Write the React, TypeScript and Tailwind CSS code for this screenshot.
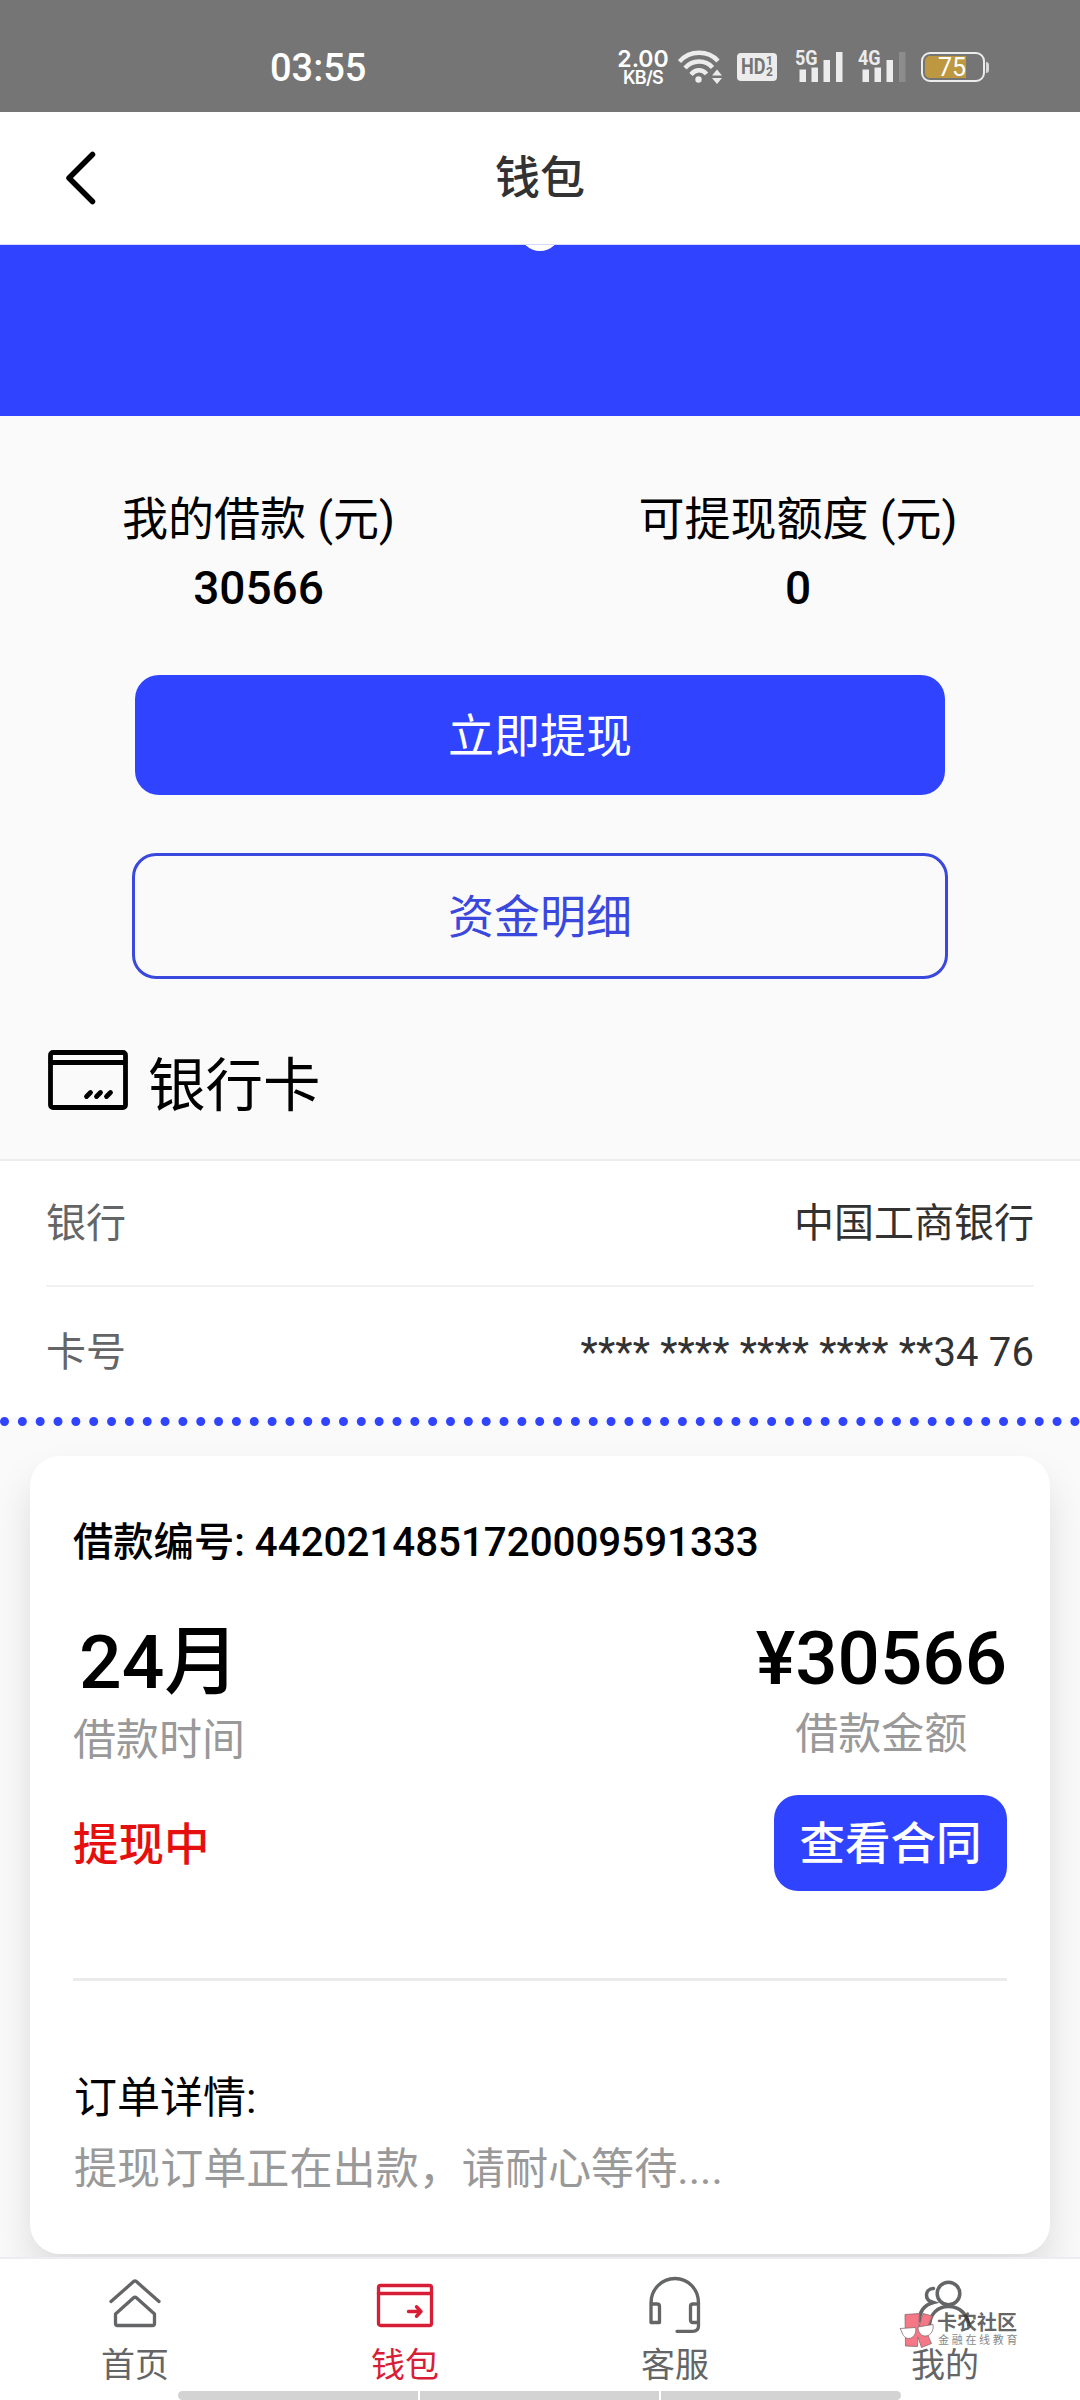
import React from 'react';

const NAV_ITEMS = [
  { key: 'home', label: '首页', icon: <HomeIcon /> },
  { key: 'wallet', label: '钱包', icon: <WalletIcon />, active: true },
  { key: 'service', label: '客服', icon: <HeadsetIcon /> },
  { key: 'mine', label: '我的', icon: <UsersIcon /> },
];

function HomeIcon() {
  return (
    <svg width="60" height="60" viewBox="0 0 60 60" fill="none" stroke="currentColor" strokeWidth="3.3" strokeLinecap="round" strokeLinejoin="round">
      <path d="M6 28.5 L28.6 8.6 Q30 7.4 31.4 8.6 L54 28.5" />
      <path d="M10.5 41 L28.6 24.8 Q30 23.6 31.4 24.8 L49.5 41 V50.5 Q49.5 52.5 47.5 52.5 H12.5 Q10.5 52.5 10.5 50.5 Z" />
    </svg>
  );
}

function WalletIcon() {
  return (
    <svg width="60" height="60" viewBox="0 0 60 60" fill="none" stroke="currentColor" strokeWidth="3.3" strokeLinecap="round" strokeLinejoin="round">
      <rect x="3.5" y="12.5" width="53" height="40" rx="2" />
      <path d="M3.5 20.5 H56.5" />
      <path d="M33.5 38.5 H45.5 M41.5 33.8 L46 38.5 L41.5 43.2" strokeWidth="3.4" />
    </svg>
  );
}

function HeadsetIcon() {
  return (
    <svg width="60" height="60" viewBox="0 0 60 60" fill="none" stroke="currentColor" strokeWidth="3.3" strokeLinejoin="round">
      <path d="M6 49.5 V30 C6 16.5 16.5 5.5 30 5.5 C43.5 5.5 53.5 16.5 53.5 30 V53 Q53.5 58.3 47.5 58.3 H32" strokeLinecap="round" />
      <path d="M6 31 H12 Q14.5 31 14.5 33.5 V49.5 H6 M53.5 31 H48 Q45.5 31 45.5 33.5 V47 Q45.5 49.5 48 49.5 H53.5" />
    </svg>
  );
}

function UsersIcon() {
  return (
    <svg width="60" height="60" viewBox="0 0 60 60" fill="none" stroke="currentColor" strokeWidth="3.5" strokeLinecap="round">
      <circle cx="33.5" cy="20.5" r="11.3" />
      <path d="M14.5 54 C14.5 41 22.5 33.5 33.5 33.5 C44.5 33.5 53 41 54 54" />
      <path d="M18.5 15.5 C13.5 15.5 11.5 19 11.5 22 C11.5 25 13.5 27.5 15.5 28.5 L18.5 29.5 C9 32 4.5 38 4.5 48" />
    </svg>
  );
}

function SignalBars({ label, weak }: { label: string; weak?: boolean }) {
  return (
    <div className="relative">
      <span className="absolute -left-[1px] -top-[5px] text-[20px] leading-[26px] font-bold origin-left scale-x-[0.9] font-[Roboto,sans-serif]">{label}</span>
      <svg width="48" height="34" viewBox="0 0 48 34" fill="#ececec">
        <rect x="3.5" y="19.5" width="6.5" height="12.5" />
        <rect x="15.5" y="17.5" width="6.5" height="14.5" />
        <rect x="27.5" y="10" width="6.5" height="22" />
        <rect x="40" y="2" width="6.5" height="30" opacity={weak ? 0.2 : 1} />
      </svg>
    </div>
  );
}

function StatusBar() {
  return (
    <div className="h-[112px] shrink-0 bg-[#757575] flex items-center pt-[22px] pr-[91px] pl-[270px] text-white">
      <span className="mt-[2px] text-[38px] leading-[44px] font-medium font-[Roboto,sans-serif]">03:55</span>
      <div className="ml-auto flex items-center text-[#ececec]">
        <div className="w-[54px] mr-[8px] pt-[1px] flex flex-col items-center text-white font-[Inter,sans-serif]">
          <span className="text-[23px] leading-[20px] font-semibold">2.00</span>
          <span className="text-[18px] leading-[18px] font-semibold -tracking-[0.7px]">KB/S</span>
        </div>
        <svg width="44" height="34" viewBox="0 0 44 34" fill="none" stroke="currentColor" strokeWidth="4.4">
          <path d="M1.5 11.5 C12 0 30 0 40 11" />
          <path d="M7 18 C14.5 9.5 27.5 9.5 34.5 17.5" />
          <path d="M13 24.5 C17.5 19 24.5 19 28.5 24" />
          <circle cx="20.5" cy="29.5" r="3.2" fill="currentColor" stroke="none" />
          <path d="M34 25.5 L39 19.5 L44 25.5 Z M34 28 L39 34 L44 28 Z" fill="currentColor" stroke="none" />
        </svg>
        <div className="ml-[15px] w-[40px] h-[28px] rounded-[4px] bg-[#ececec] text-[#757575] font-bold font-[Roboto,sans-serif] relative">
          <span className="absolute left-[4px] top-[1px] text-[22px] leading-[26px] origin-left scale-x-[0.82]">HD</span>
          <div className="absolute left-[29px] top-[3px] flex flex-col text-[12px] leading-[11px]">
            <span>1</span>
            <span>2</span>
          </div>
        </div>
        <div className="ml-[19px]"><SignalBars label="5G" /></div>
        <div className="ml-[15px]"><SignalBars label="4G" weak /></div>
        <div className="ml-[14px] flex items-center">
          <div className="w-[64px] h-[30px] rounded-[9px] border-[2.5px] border-[#ececec] p-[2px] relative">
            <div className="w-[41px] h-full rounded-l-[5px] bg-[#bd9840]" />
            <span className="absolute left-[15px] top-[1px] text-[25px] leading-[25px] text-white font-[Roboto,sans-serif]">75</span>
          </div>
          <div className="w-[3px] h-[11px] ml-[1px] rounded-r bg-[#d8d8d8]" />
        </div>
      </div>
    </div>
  );
}

function Summary({ title, value }: { title: string; value: string }) {
  return (
    <div className="flex flex-col items-center text-black text-[46px] whitespace-nowrap">
      <span className="leading-[70px]">{title}</span>
      <span className="leading-[69px] font-medium">{value}</span>
    </div>
  );
}

function Watermark() {
  return (
    <div className="absolute left-[899px] top-[2312px] flex items-start">
      <svg width="36" height="37" viewBox="0 0 36 37" stroke="#8a6a6e" strokeWidth="0.8">
        <g fill="#f4717f" fillOpacity="0.95">
          <path d="M6 2.5 L20.5 1.5 L20 15 L24 1.5 L33.5 4 L27 19 L32.5 31.5 L22.5 35.5 L19 25 L18.5 34.5 L6.5 34 Z" />
        </g>
        <path d="M1 16.5 L16.5 15.5 C18 21 14.5 26.5 9.5 26.5 C5 26.5 3 21 2.5 19 Z" fill="#fff" />
        <path d="M19 15 L34 12.5 C35 18 32 23.5 27 24 C22 24.5 19 20 19 15 Z" fill="#fff" />
      </svg>
      <div className="ml-[2px] flex flex-col whitespace-nowrap">
        <span className="text-[20px] leading-[23px] font-bold text-[#333333]/75">卡农社区</span>
        <span className="text-[11px] leading-[12px] tracking-[2.7px] text-[#888888] ml-[1px]">金融在线教育</span>
      </div>
    </div>
  );
}

export default function App() {
  return (
    <div className="relative w-[1080px] h-[2400px] overflow-hidden flex flex-col bg-[#fafafa] font-[Roboto,'Noto_Sans_CJK_SC',sans-serif]">
      <StatusBar />

      <header className="h-[132px] shrink-0 bg-white grid grid-cols-3 items-center px-[62px]">
        <svg width="36" height="56" viewBox="0 0 36 56" fill="none" stroke="#000" strokeWidth="5.5" strokeLinecap="round" strokeLinejoin="round">
          <path d="M30.5 4.5 L7 28 L30.5 51.5" />
        </svg>
        <h1 className="pt-[2px] text-center text-[45px] leading-[60px] font-medium text-[#323233]">钱包</h1>
      </header>

      <main className="h-[2013px] shrink-0 overflow-hidden">
        <div className="h-[172px] bg-[#3044ff] border-t border-[#d5daff] overflow-hidden">
          <div className="w-[40px] h-[40px] mx-auto -mt-[34px] rounded-full bg-white" />
        </div>

        <div className="flex pt-[68px]">
          <div className="w-[516px] flex justify-center pl-[1px]"><Summary title="我的借款 (元)" value="30566" /></div>
          <div className="flex-1 flex justify-center"><Summary title="可提现额度 (元)" value="0" /></div>
        </div>

        <div className="mt-[52px] flex flex-col items-center text-[46px]">
          <button className="w-[810px] h-[120px] pt-[3px] rounded-[24px] bg-[#3044ff] text-white">立即提现</button>
          <button className="w-[816px] h-[126px] pt-[2px] mt-[58px] rounded-[24px] border-[3px] border-[#3a48dd] text-[#3a48dd]">资金明细</button>
        </div>

        {/* Bank card */}
        <div className="mt-[41px] h-[139px] flex items-start pl-[48px]">
          <svg className="mt-[30px]" width="80" height="60" viewBox="0 0 80 60" fill="none" stroke="#000" strokeWidth="4.8" strokeLinecap="round">
            <rect x="2.5" y="2.5" width="75" height="55" rx="2.5" />
            <path d="M3 12.5 H77" />
            <path d="M38.5 46.5 L42.5 42.5 M48.5 46.5 L52.5 42.5 M58.5 46.5 L62.5 42.5" />
          </svg>
          <h2 className="ml-[20px] mt-[27px] text-[57.5px] leading-[80px] text-black">银行卡</h2>
        </div>
        <div className="bg-white border-t-2 border-[#ebedf0] px-[46px] text-[40px]">
          <div className="h-[126px] pt-[2px] flex justify-between items-center border-b-2 border-[#f0f1f3]">
            <span className="text-[#646566]">银行</span>
            <span className="text-[#323233]">中国工商银行</span>
          </div>
          <div className="h-[130px] pt-[2px] flex justify-between items-center">
            <span className="text-[#646566]">卡号</span>
            <span className="text-[#323233] tracking-[0.14px]">**** **** **** **** **34 76</span>
          </div>
        </div>
        <div className="border-t-[9px] border-dotted border-[#3044ff]" />

        {/* Loan order */}
        <section className="mt-[30px] mx-[30px] h-[798px] px-[43px] pt-[57px] rounded-[30px] bg-white text-black shadow-[0_24px_40px_rgba(0,0,0,0.12)]">
          <p className="text-[40.3px] leading-[60px] font-medium">借款编号: 4420214851720009591333</p>
          <div className="mt-[38px] flex justify-between">
            <div className="flex flex-col">
              <span className="pl-[6px] pt-[3px] text-[75px] leading-[96px] font-medium">24月</span>
              <span className="text-[43px] leading-[60px] text-[#999999]">借款时间</span>
            </div>
            <div className="flex flex-col items-center">
              <span className="pt-[2px] text-[74.5px] leading-[91px] font-medium">¥30566</span>
              <span className="text-[43px] leading-[60px] text-[#999999]">借款金额</span>
            </div>
          </div>
          <div className="mt-[25px] flex justify-between items-center">
            <span className="pt-[6px] text-[45.5px] font-medium text-[#e60f0f]">提现中</span>
            <button className="w-[233px] h-[96px] pt-[4px] rounded-[24px] bg-[#3044ff] text-white text-[45.5px] font-medium">查看合同</button>
          </div>
          <div className="mt-[87px] h-[3px] bg-[#ebebeb]" />
          <p className="mt-[84px] pl-[1px] text-[43px] leading-[66px]">订单详情:</p>
          <p className="mt-[6px] pl-[1px] text-[43.1px] leading-[66px] text-[#999999]">提现订单正在出款，请耐心等待....</p>
        </section>
      </main>

      <nav className="relative flex-1 bg-white border-t-2 border-[#ebedf0] flex">
        {NAV_ITEMS.map(item => (
          <div key={item.key} className={`w-1/4 flex flex-col items-center pt-[14px] ${item.active ? 'text-[#d81e36]' : 'text-[#646566]'}`}>
            {item.icon}
            <span className="mt-[8px] text-[34px] leading-[48px]">{item.label}</span>
          </div>
        ))}
        <div className="absolute left-[178px] bottom-0 w-[723px] h-[9px] flex gap-[2px] rounded-l-full rounded-r-full overflow-hidden">
          <div className="flex-1 bg-[#d3d3d3]" />
          <div className="flex-1 bg-[#d3d3d3]" />
          <div className="flex-1 bg-[#d3d3d3]" />
        </div>
      </nav>

      <Watermark />
    </div>
  );
}
